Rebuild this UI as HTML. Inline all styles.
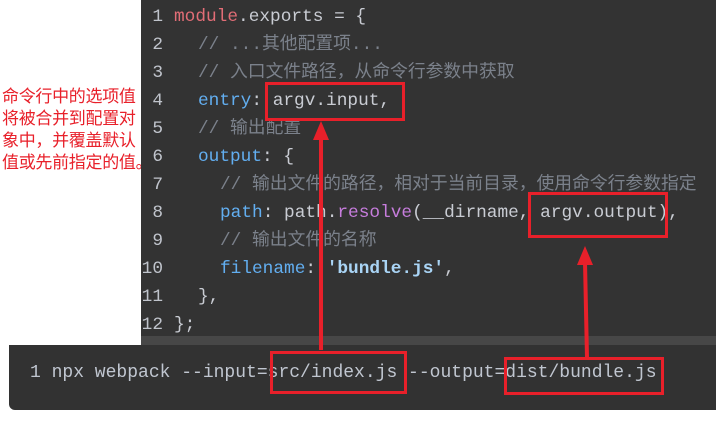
<!DOCTYPE html>
<html><head><meta charset="utf-8"><style>
html,body{margin:0;padding:0;}
body{width:716px;height:421px;background:#fff;position:relative;overflow:hidden;font-family:"Liberation Mono","Noto Sans CJK SC",monospace;}
#code{position:absolute;left:141px;top:0;width:575px;height:345px;background:#333333;}
#band{position:absolute;left:141px;top:336px;width:575px;height:10px;background:#474747;}
.ln{position:absolute;left:0;width:575px;height:28px;line-height:28px;font-size:17.8px;color:#c9ccd3;white-space:pre;}
.n{display:inline-block;width:22px;text-align:right;color:#c0c4cc;margin-right:11px;}
.i1{display:inline-block;width:24px}.i2{display:inline-block;width:46px}
.r{color:#e26d76}.b{color:#62aef0}.p{color:#c77ddd}.c{color:#7b818b}.s{color:#a9d4f5;font-weight:bold}
#bot{position:absolute;left:9px;top:345px;width:707px;height:65px;background:#323232;border-bottom-left-radius:6px;}
#bot div{position:absolute;left:21px;top:18px;font-size:18px;color:#c0c6d0;white-space:pre;}
#note{position:absolute;left:2px;top:84px;font-family:"Noto Sans CJK SC",sans-serif;font-size:17px;line-height:22px;color:#e8202a;width:160px;white-space:nowrap;letter-spacing:-0.3px}
.box{position:absolute;border:3px solid #e8202a;box-sizing:border-box;}
</style></head><body>
<div id="note">命令行中的选项值<br>将被合并到配置对<br>象中，并覆盖默认<br>值或先前指定的值。</div>
<div id="code">
<div class="ln" style="top:3px"><span class="n">1</span><span class="r">module</span>.exports = {</div>
<div class="ln" style="top:31px"><span class="n">2</span><span class="i1"></span><span class="c">// ...其他配置项...</span></div>
<div class="ln" style="top:59px"><span class="n">3</span><span class="i1"></span><span class="c">// 入口文件路径，从命令行参数中获取</span></div>
<div class="ln" style="top:87px"><span class="n">4</span><span class="i1"></span><span class="b">entry</span>: argv.input,</div>
<div class="ln" style="top:115px"><span class="n">5</span><span class="i1"></span><span class="c">// 输出配置</span></div>
<div class="ln" style="top:143px"><span class="n">6</span><span class="i1"></span><span class="b">output</span>: {</div>
<div class="ln" style="top:171px"><span class="n">7</span><span class="i2"></span><span class="c">// 输出文件的路径，相对于当前目录，使用命令行参数指定</span></div>
<div class="ln" style="top:199px"><span class="n">8</span><span class="i2"></span><span class="b">path</span>: path.<span class="p">resolve</span>(__dirname, argv.output),</div>
<div class="ln" style="top:227px"><span class="n">9</span><span class="i2"></span><span class="c">// 输出文件的名称</span></div>
<div class="ln" style="top:255px"><span class="n">10</span><span class="i2"></span><span class="b">filename</span>: <span class="s">'bundle.js'</span>,</div>
<div class="ln" style="top:283px"><span class="n">11</span><span class="i1"></span>},</div>
<div class="ln" style="top:311px"><span class="n">12</span>};</div>
</div>
<div id="band"></div>
<div id="bot"><div>1 npx webpack --input=src/index.js --output=dist/bundle.js</div></div>
<div class="box" style="left:265px;top:82px;width:140px;height:39px"></div>
<div class="box" style="left:528px;top:192px;width:140px;height:46px"></div>
<div class="box" style="left:270px;top:351px;width:137px;height:43px"></div>
<div class="box" style="left:504px;top:357px;width:160px;height:38px"></div>
<svg width="716" height="421" style="position:absolute;left:0;top:0">
<line x1="321" y1="350" x2="321" y2="135" stroke="#e8202a" stroke-width="4"/>
<polygon points="321,121 313,140 329,140" fill="#e8202a"/>
<line x1="587" y1="358" x2="585" y2="262" stroke="#e8202a" stroke-width="4"/>
<polygon points="585,246 577,265 593,265" fill="#e8202a"/>
</svg>
</body></html>
